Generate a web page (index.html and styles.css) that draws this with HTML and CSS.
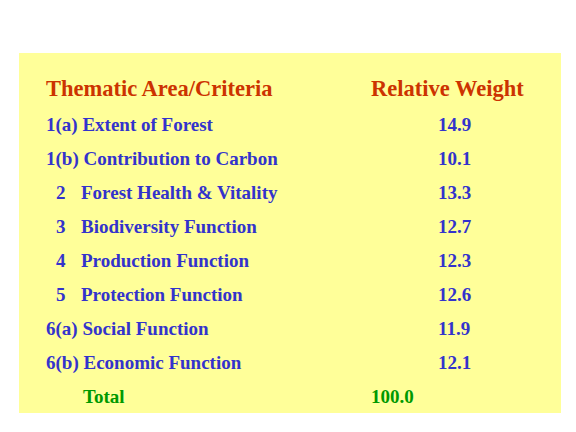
FILE: index.html
```html
<!DOCTYPE html>
<html>
<head>
<meta charset="utf-8">
<link rel="stylesheet" href="styles.css">
</head>
<body>
<div class="panel">
  <div class="row head"><div>Thematic Area/Criteria</div><div>Relative Weight</div></div>
  <div class="row"><div>1(a) Extent of Forest</div><div class="val">14.9</div></div>
  <div class="row"><div>1(b) Contribution to Carbon</div><div class="val">10.1</div></div>
  <div class="row"><div><span class="num">2</span>Forest Health &amp; Vitality</div><div class="val">13.3</div></div>
  <div class="row"><div><span class="num">3</span>Biodiversity Function</div><div class="val">12.7</div></div>
  <div class="row"><div><span class="num">4</span>Production Function</div><div class="val">12.3</div></div>
  <div class="row"><div><span class="num">5</span>Protection Function</div><div class="val">12.6</div></div>
  <div class="row"><div>6(a) Social Function</div><div class="val">11.9</div></div>
  <div class="row"><div>6(b) Economic Function</div><div class="val">12.1</div></div>
  <div class="row total"><div class="tlabel">Total</div><div>100.0</div></div>
</div>
</body>
</html>
```

FILE: styles.css
```css
html, body {
  margin: 0;
  padding: 0;
  background: #ffffff;
}
body {
  width: 576px;
  height: 432px;
  overflow: hidden;
  font-family: "Liberation Serif", "Times New Roman", serif;
  font-weight: bold;
}
.panel {
  margin: 53px 0 0 19px;
  width: 542px;
  height: 360px;
  box-sizing: border-box;
  background: #ffff99;
  padding: 18px 0 0 27px;
}
.row {
  display: grid;
  grid-template-columns: 325px 1fr;
  font-size: 19px;
  line-height: 34.1px;
  height: 34.1px;
  color: #3333cc;
  white-space: nowrap;
}
.row.head {
  font-size: 22.5px;
  line-height: 35px;
  height: 35px;
  padding-bottom: 1.7px;
  color: #cc3300;
}
.num {
  display: inline-block;
  width: 25px;
  padding-left: 10px;
}
.val {
  padding-left: 67px;
}
.row.total {
  color: #009900;
}
.tlabel {
  padding-left: 37px;
}
```
